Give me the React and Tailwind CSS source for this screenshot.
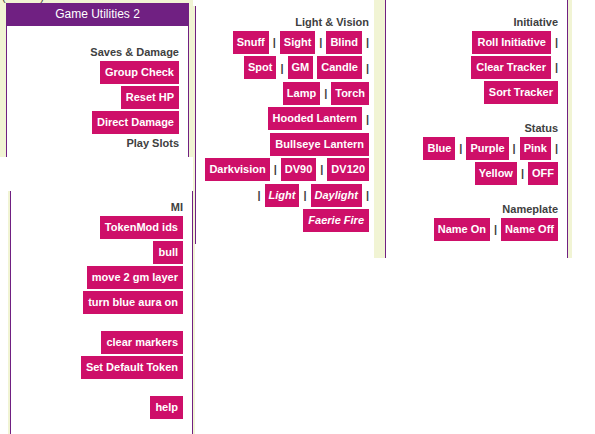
import React from "react";

function Tag({ children, italic, compact }) {
  return (
    <button
      type="button"
      className={`h-[23px] whitespace-nowrap bg-[#ce0f69] text-[11px] leading-[23px] font-bold text-white ${compact ? "px-1" : "px-[5px]"} ${italic ? "italic" : ""}`}
    >
      {children}
    </button>
  );
}

function Row({ items }) {
  return (
    <div className="flex items-center justify-end gap-1">
      {items.map((item, i) =>
        item === "|" ? (
          <span key={i}>|</span>
        ) : (
          <Tag key={i} italic={item.startsWith("/")} compact={items.length > 2}>
            {item.replace("/", "")}
          </Tag>
        )
      )}
    </div>
  );
}

function Group({ title, rows, className = "" }) {
  return (
    <section className="text-right">
      {title && <h2 className="mb-px leading-4 font-bold">{title}</h2>}
      <div className={`flex flex-col gap-[2px] ${className}`}>
        {rows.map((items, i) => (
          <Row key={i} items={items} />
        ))}
      </div>
    </section>
  );
}

export default function App() {
  return (
    <main className="flex min-h-screen items-stretch bg-white font-['Liberation_Sans',Arial,sans-serif] text-[11px] font-bold text-[#404040]">
      <div className="flex w-[193px] shrink-0 flex-col">
        <div className="bg-[#f1f4d4] pr-1 pl-[6px]">
          <div className="-ml-1 flex h-[3px] w-[42px] items-end justify-between overflow-hidden leading-3 font-normal">
            <span>(</span>
            <span>)</span>
          </div>
          <div className="border-x border-[#702082] bg-white pb-[6px]">
            <h1 className="h-[23px] bg-[#702082] text-center text-xs leading-[22px] font-normal text-white">
              Game Utilities 2
            </h1>
            <div className="pt-[18px] pr-[9px]">
              <Group title="Saves & Damage" rows={[["Group Check"], ["Reset HP"], ["Direct Damage"]]} />
              <p className="pt-px text-right leading-4">Play Slots</p>
            </div>
          </div>
        </div>
        <div className="mt-[34px] ml-2 flex-1 border-l-2 border-[#f1f4d4]">
          <div className="flex h-full flex-col gap-[17px] border-x border-[#702082] pt-2 pr-[9px]">
            <Group title="MI" rows={[["TokenMod ids"], ["bull"], ["move 2 gm layer"], ["turn blue aura on"]]} />
            <Group rows={[["clear markers"], ["Set Default Token"]]} />
            <Group rows={[["help"]]} />
          </div>
        </div>
      </div>
      <div className="mt-[6px] w-[2px] shrink-0 bg-[#f1f4d4]" />
      <div className="w-[179px] shrink-0 pt-[6px]">
        <div className="border-l border-[#702082] pt-2 pr-[5px] pb-3">
          <Group
            title="Light & Vision"
            className="min-h-[201px] justify-between"
            rows={[
              ["Snuff", "|", "Sight", "|", "Blind", "|"],
              ["Spot", "|", "GM", "Candle", "|"],
              ["Lamp", "|", "Torch"],
              ["Hooded Lantern", "|"],
              ["Bullseye Lantern"],
              ["Darkvision", "|", "DV90", "|", "DV120"],
              ["|", "/Light", "|", "/Daylight", "|"],
              ["/Faerie Fire"],
            ]}
          />
        </div>
      </div>
      <div className="w-[198px] shrink-0 self-start bg-[#f1f4d4] pr-1 pl-[11px]">
        <div className="flex flex-col gap-4 border-x border-[#702082] bg-white pt-[14px] pr-[9px] pb-[17px]">
          <Group title="Initiative" rows={[["Roll Initiative", "|"], ["Clear Tracker", "|"], ["Sort Tracker"]]} />
          <Group title="Status" rows={[["Blue", "|", "Purple", "|", "Pink", "|"], ["Yellow", "|", "OFF"]]} />
          <Group title="Nameplate" rows={[["Name On", "|", "Name Off"]]} />
        </div>
      </div>
    </main>
  );
}
